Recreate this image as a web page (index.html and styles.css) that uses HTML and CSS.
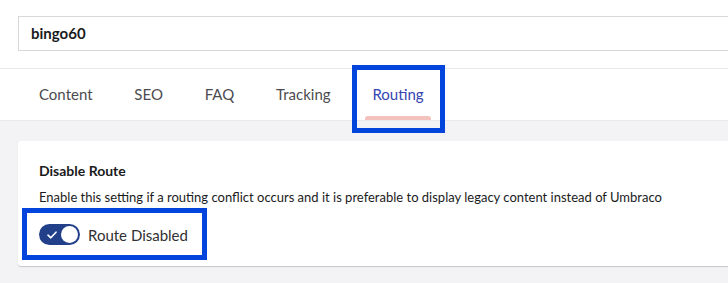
FILE: index.html
```html
<!DOCTYPE html>
<html>
<head>
<meta charset="utf-8">
<link rel="stylesheet" href="styles.css">
</head>
<body>
<div class="header">
  <div class="name-input">bingo60</div>
</div>
<div class="tabs">
  <div class="tab">Content</div>
  <div class="tab">SEO</div>
  <div class="tab">FAQ</div>
  <div class="tab">Tracking</div>
  <div class="tab active">Routing<span class="underline"></span><span class="annot annot-tab"></span></div>
</div>
<div class="main">
  <div class="card">
    <div class="prop-label">Disable Route</div>
    <div class="prop-desc">Enable this setting if a routing conflict occurs and it is preferable to display legacy content instead of Umbraco</div>
    <div class="toggle-row">
      <span class="annot annot-toggle"></span>
      <span class="toggle">
        <svg class="check" width="10" height="8" viewBox="0 0 10 8"><path d="M1 4.2 L3.8 6.8 L9 1.2" fill="none" stroke="#fff" stroke-width="1.6" stroke-linecap="round" stroke-linejoin="round"/></svg>
        <span class="knob"></span>
      </span>
      <span class="toggle-label">Route Disabled</span>
    </div>
  </div>
</div>
</body>
</html>
```
FILE: styles.css
```css
* { box-sizing: border-box; }
html, body { margin: 0; padding: 0; }
body {
  background: #f3f3f5;
  font-family: Lato, "Open Sans", sans-serif;
  color: #303033;
  width: 728px;
  height: 283px;
  overflow: hidden;
}
.header {
  background: #fff;
  height: 69px;
  padding: 16px 0 0 18px;
  border-bottom: 1px solid #e9e9eb;
}
.name-input {
  height: 35px;
  border: 1px solid #d8d7d9;
  border-right: none;
  padding-left: 12px;
  font-weight: 700;
  font-size: 15px;
  line-height: 33px;
  color: #1b1b1d;
}
.tabs {
  background: #fff;
  height: 52px;
  display: flex;
  padding-left: 19px;
  gap: 1.8px;
  border-bottom: 1px solid #e9e9eb;
}
.tab {
  position: relative;
  padding: 0 20px;
  font-size: 15px;
  line-height: 51px;
  color: #4c4b50;
}
.tab.active { color: #3544b1; }
.underline {
  position: absolute;
  left: 13px;
  right: 13px;
  bottom: 0;
  height: 4px;
  border-radius: 3px 3px 0 0;
  background: #f5c1bc;
}
.annot {
  position: absolute;
  border: 5px solid #0345dc;
  pointer-events: none;
}
.annot-tab {
  left: 0;
  right: -1px;
  top: -4px;
  bottom: -13px;
}
.main {
  padding: 20px 0 0 18px;
}
.card {
  background: #fff;
  height: 125px;
  padding: 20px 20px 0 21px;
  box-shadow: 0 1px 1px rgba(0,0,0,0.18);
  border-radius: 3px 0 0 3px;
}
.prop-label {
  font-weight: 700;
  font-size: 14px;
  line-height: 20px;
  color: #1b1b1d;
}
.prop-desc {
  margin-top: 6px;
  font-size: 13px;
  line-height: 20px;
  color: #1b1b1d;
}
.toggle-row {
  position: relative;
  margin-top: 17px;
  display: flex;
  align-items: center;
  gap: 8px;
  height: 21px;
}
.annot-toggle {
  left: -17px;
  top: -16px;
  width: 185px;
  height: 52px;
}
.toggle {
  position: relative;
  width: 41px;
  height: 21px;
  border-radius: 11px;
  background: #22408a;
  display: flex;
  align-items: center;
  justify-content: space-between;
  padding: 0 2px 0 8px;
}
.check { display: block; }
.knob {
  width: 17px;
  height: 17px;
  border-radius: 50%;
  background: #fff;
}
.toggle-label {
  font-size: 15px;
  color: #303033;
}
```
